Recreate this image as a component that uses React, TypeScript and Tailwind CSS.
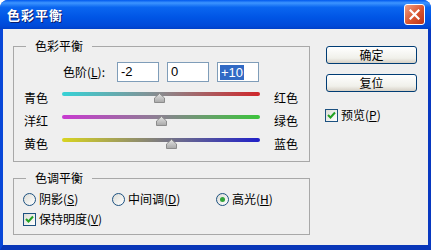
import React from "react";

const cjk = "font-['Noto_Sans_CJK_SC','Noto_Sans',sans-serif]";

type SliderRow = { left: string; right: string; value: number; gradient: string };

const sliders: SliderRow[] = [
  { left: "青色", right: "红色", value: -2, gradient: "bg-[linear-gradient(to_right,#36d2d6,#8a8a8e_50%,#d0262a)]" },
  { left: "洋红", right: "绿色", value: 0, gradient: "bg-[linear-gradient(to_right,#c83ad0,#8a8290_50%,#3cc43c)]" },
  { left: "黄色", right: "蓝色", value: 10, gradient: "bg-[linear-gradient(to_right,#d8d420,#7c7a80_50%,#2020c8)]" },
];

function Thumb() {
  return (
    <svg width="11" height="10" viewBox="0 0 11 10">
      <defs>
        <linearGradient id="tg" x1="0" y1="0" x2="0" y2="1">
          <stop offset="0" stopColor="#e4e4e4" />
          <stop offset="1" stopColor="#a8a8a8" />
        </linearGradient>
      </defs>
      <path d="M5.5 0.5 L10.5 5 L10.5 9.5 L0.5 9.5 L0.5 5 Z" fill="url(#tg)" stroke="#8c8c8c" />
    </svg>
  );
}

function Checkbox() {
  return (
    <span className="flex h-[13px] w-[13px] items-center justify-center border border-[#1c5180] bg-[linear-gradient(135deg,#dcdcd6,#ffffff)]">
      <svg width="9" height="9" viewBox="0 0 9 9">
        <path d="M1 4 L3.5 6.5 L8 1.5" fill="none" stroke="#21a121" strokeWidth="2" />
      </svg>
    </span>
  );
}

function Radio({ on }: { on?: boolean }) {
  return (
    <span className="flex h-[13px] w-[13px] items-center justify-center rounded-full border border-[#1c5180] bg-[linear-gradient(135deg,#dcdcd6,#ffffff)]">
      {on && <span className="h-[5px] w-[5px] rounded-full bg-[#31a43a]" />}
    </span>
  );
}

function Button({ children }: { children: React.ReactNode }) {
  return (
    <button className="flex h-[18px] w-[91px] items-center justify-center rounded-[3px] border border-[#003c74] bg-[linear-gradient(to_bottom,#ffffff,#f0f0ea_70%,#d6d0c5)] text-[12px] leading-none text-black">
      {children}
    </button>
  );
}

export default function App() {
  return (
    <div className={`flex h-[250px] w-[431px] flex-col overflow-hidden rounded-t-[8px] bg-[#0a4fe0] ${cjk} text-[12px] text-black`}>
      {/* title bar */}
      <div className="flex h-[29px] items-center justify-between bg-[linear-gradient(to_bottom,#0058ee_0%,#3d95ff_10%,#0a66f0_25%,#0055e5_60%,#0049d8_90%,#0040c8_100%)] pl-[7px] pr-[6px]">
        <span className="text-[13px] font-bold tracking-[1px] text-white [text-shadow:1px_1px_0_#0a1e6e]">色彩平衡</span>
        <span className="flex h-[21px] w-[21px] items-center justify-center rounded-[3px] border border-white bg-[linear-gradient(135deg,#f0a084,#d8542e_55%,#b8321a)]">
          <svg width="11" height="11" viewBox="0 0 11 11">
            <path d="M1.5 1.5 L9.5 9.5 M9.5 1.5 L1.5 9.5" stroke="#fff" strokeWidth="2.2" strokeLinecap="square" />
          </svg>
        </span>
      </div>

      {/* body */}
      <div className="flex flex-1 border-x-[3px] border-b-[5px] border-l-[#0847d8] border-r-[#0838c0] border-b-[#0836b8] bg-[#efefef]">
        <div className="flex items-start pl-[10px] pt-[9px]">
          <div className="flex w-[297px] flex-col">
            <fieldset className="border border-[#a8a8a8] pb-[9px]">
              <legend className="ml-[12px] px-[9px] leading-[16px]">色彩平衡</legend>
              <div className="flex items-center pl-[49px] pt-[8px]">
                <span className="w-[54px] leading-[16px]">
                  色阶(<u>L</u>):
                </span>
                <div className="flex gap-[8px] font-['Liberation_Sans',sans-serif] text-[13px]">
                  <span className="flex h-[20px] w-[42px] items-center border border-[#7f9db9] bg-white pl-[3px]">-2</span>
                  <span className="flex h-[20px] w-[42px] items-center border border-[#7f9db9] bg-white pl-[3px]">0</span>
                  <span className="flex h-[20px] w-[42px] items-center border border-[#7f9db9] bg-white pl-[2px]">
                    <span className="bg-[#316ac5] px-[1px] leading-[15px] text-white">+10</span>
                  </span>
                </div>
              </div>
              <div className="mt-[8px] flex flex-col gap-[7px] pl-[10px]">
                {sliders.map((s) => (
                  <div key={s.left} className="flex h-[16px] items-start">
                    <span className="w-[38px] leading-[16px]">{s.left}</span>
                    <div className={`relative mt-[2px] h-[4px] w-[198px] rounded-full ${s.gradient}`}>
                      <span
                        className="absolute top-[1px] -ml-[5px]"
                        style={{ left: `${50 + s.value / 2}%` }}
                      >
                        <Thumb />
                      </span>
                    </div>
                    <span className="ml-[14px] leading-[16px]">{s.right}</span>
                  </div>
                ))}
              </div>
            </fieldset>

            <fieldset className="mt-[8px] border border-[#a8a8a8] pb-[7px]">
              <legend className="ml-[12px] px-[9px] leading-[16px]">色调平衡</legend>
              <div className="flex h-[16px] items-center pl-[9px] pt-0 mt-[5px]">
                <label className="flex w-[89px] items-center gap-[3px]">
                  <Radio />
                  <span>
                    阴影(<u>S</u>)
                  </span>
                </label>
                <label className="flex w-[104px] items-center gap-[3px]">
                  <Radio />
                  <span>
                    中间调(<u>D</u>)
                  </span>
                </label>
                <label className="flex items-center gap-[3px]">
                  <Radio on />
                  <span>
                    高光(<u>H</u>)
                  </span>
                </label>
              </div>
              <label className="mt-[4px] flex h-[16px] items-center gap-[3px] pl-[9px]">
                <Checkbox />
                <span>
                  保持明度(<u>V</u>)
                </span>
              </label>
            </fieldset>
          </div>

          <div className="ml-[16px] flex flex-col pt-[8px]">
            <Button>确定</Button>
            <div className="mt-[10px]">
              <Button>复位</Button>
            </div>
            <label className="mt-[15px] flex h-[16px] items-center gap-[3px] -ml-[1px]">
              <Checkbox />
              <span>
                预览(<u>P</u>)
              </span>
            </label>
          </div>
        </div>
      </div>
    </div>
  );
}
